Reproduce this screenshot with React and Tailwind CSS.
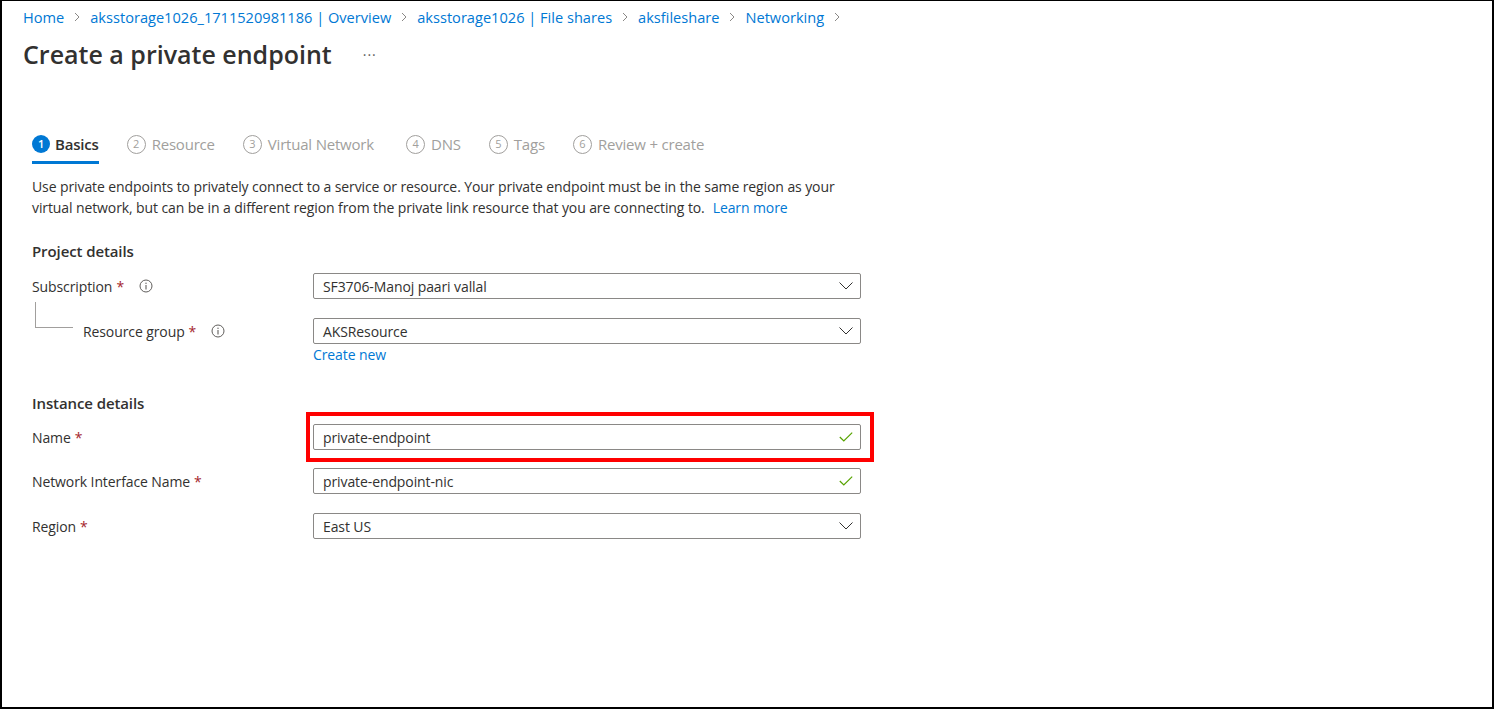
import React from "react";

const crumbs = [
  "Home",
  "aksstorage1026_1711520981186 | Overview",
  "aksstorage1026 | File shares",
  "aksfileshare",
  "Networking",
];

const tabs = [
  { n: 1, label: "Basics", active: true },
  { n: 2, label: "Resource" },
  { n: 3, label: "Virtual Network", extra: true },
  { n: 4, label: "DNS" },
  { n: 5, label: "Tags" },
  { n: 6, label: "Review + create" },
];

function Chevron() {
  return (
    <svg width="10" height="10" viewBox="0 0 10 10" className="mx-[8px]">
      <path d="M3 1 L7 5 L3 9" fill="none" stroke="#8a8886" strokeWidth="1" />
    </svg>
  );
}

function InfoIcon() {
  return (
    <svg width="14" height="14" viewBox="0 0 14 14">
      <circle cx="7" cy="7" r="6" fill="none" stroke="#605e5c" strokeWidth="1" />
      <line x1="7" y1="6" x2="7" y2="10.5" stroke="#605e5c" strokeWidth="1.1" />
      <circle cx="7" cy="4.2" r="0.7" fill="#605e5c" />
    </svg>
  );
}

function DownArrow() {
  return (
    <svg width="14" height="8" viewBox="0 0 14 8">
      <path d="M0.5 0.5 L7 7 L13.5 0.5" fill="none" stroke="#323130" strokeWidth="1" />
    </svg>
  );
}

function Check() {
  return (
    <svg width="14" height="10" viewBox="0 0 14 10">
      <path d="M0.8 5 L4.8 9 L13.2 0.6" fill="none" stroke="#57a300" strokeWidth="1.2" />
    </svg>
  );
}

function Field({ value, kind }) {
  return (
    <div className="w-[548px] h-[26px] border border-[#8a8886] rounded-[2px] flex items-center justify-between pl-[9px] pr-[7px] text-[14px] text-[#323130]">
      <span>{value}</span>
      {kind === "select" ? <DownArrow /> : <Check />}
    </div>
  );
}

function Label({ text, info }) {
  return (
    <div className="flex items-center text-[14px] text-[#323130]">
      <span>{text}</span>
      <span className="text-[#a4262c] ml-[4px]">*</span>
      {info && (
        <span className="ml-[15px] flex items-center">
          <InfoIcon />
        </span>
      )}
    </div>
  );
}

export default function App() {
  return (
    <div
      className="w-[1494px] h-[709px] bg-white border-l-2 border-t border-r-2 border-b-2 border-black text-[#323130] overflow-hidden tracking-[-0.1px]"
      style={{ fontFamily: '"Open Sans", "Noto Sans", sans-serif' }}
    >
      {/* breadcrumb */}
      <div className="flex items-center h-[20px] mt-[6px] pl-[21px] text-[14.6px] text-[#0078d4] leading-[20px] tracking-normal">
        {crumbs.map((c) => (
          <React.Fragment key={c}>
            <span>{c}</span>
            <Chevron />
          </React.Fragment>
        ))}
      </div>

      {/* title */}
      <div className="flex items-center mt-[11px] pl-[21px] h-[32px]">
        <h1 className="text-[25px] font-semibold text-[#323130] leading-[32px] tracking-normal">Create a private endpoint</h1>
        <span className="ml-[31px] text-[14px] text-[#605e5c] tracking-[1px]">···</span>
      </div>

      {/* tabs */}
      <div className="flex items-end mt-[63px] pl-[30px] gap-[28px] tracking-[-0.2px]">
        {tabs.map((t) => (
          <div
            key={t.n}
            className={
              (t.active
                ? "flex items-center h-[31px] pb-[6px] border-b-[3px] border-[#0078d4]"
                : "flex items-center h-[31px] pb-[6px] border-b-[3px] border-transparent") +
              (t.extra ? " mr-[4px]" : "")
            }
          >
            {t.active ? (
              <span className="w-[18px] h-[18px] rounded-full bg-[#0078d4] text-white text-[11px] font-semibold flex items-center justify-center">
                {t.n}
              </span>
            ) : (
              <span className="w-[19px] h-[19px] rounded-full border border-[#a19f9d] text-[#a19f9d] text-[11px] flex items-center justify-center">
                {t.n}
              </span>
            )}
            <span
              className={
                t.active
                  ? "ml-[5px] text-[15px] font-semibold text-[#323130]"
                  : "ml-[6px] text-[15px] text-[#a19f9d]"
              }
            >
              {t.label}
            </span>
          </div>
        ))}
      </div>

      {/* form */}
      <div className="pl-[30px] mt-[12px] text-[14px]">
        <p className="leading-[21px] w-[820px]">
          Use private endpoints to privately connect to a service or resource. Your private endpoint must be in the same region as your virtual network, but can be in a different region from the private link resource that you are connecting to.
          <span className="ml-[8px] text-[#0078d4]">Learn more</span>
        </p>

        <div className="mt-[23px] font-semibold text-[15px] leading-[20px]">Project details</div>

        <div className="flex items-center mt-[12px]">
          <div className="w-[281px]">
            <Label text="Subscription" info />
          </div>
          <Field value="SF3706-Manoj paari vallal" kind="select" />
        </div>

        <div className="flex items-center mt-[19px]">
          <div className="w-[281px] h-[26px] flex items-center relative">
            <div className="absolute left-[3px] top-[-16px] w-[38px] h-[26px] border-l border-b border-[#a19f9d]" />
            <div className="pl-[51px]">
              <Label text="Resource group" info />
            </div>
          </div>
          <Field value="AKSResource" kind="select" />
        </div>

        <div className="flex mt-[1px]">
          <div className="w-[281px]" />
          <span className="text-[#0078d4] leading-[20px]">Create new</span>
        </div>

        <div className="mt-[28px] font-semibold text-[15px] leading-[20px]">Instance details</div>

        <div className="flex items-center mt-[11px]">
          <div className="w-[281px]">
            <Label text="Name" />
          </div>
          <div className="relative">
            <div className="absolute left-[-7px] top-[-12px] w-[568px] h-[50px] border-4 border-[#ff0000]" />
            <Field value="private-endpoint" kind="check" />
          </div>
        </div>

        <div className="flex items-center mt-[18px]">
          <div className="w-[281px]">
            <Label text="Network Interface Name" />
          </div>
          <Field value="private-endpoint-nic" kind="check" />
        </div>

        <div className="flex items-center mt-[19px]">
          <div className="w-[281px]">
            <Label text="Region" />
          </div>
          <Field value="East US" kind="select" />
        </div>
      </div>
    </div>
  );
}
